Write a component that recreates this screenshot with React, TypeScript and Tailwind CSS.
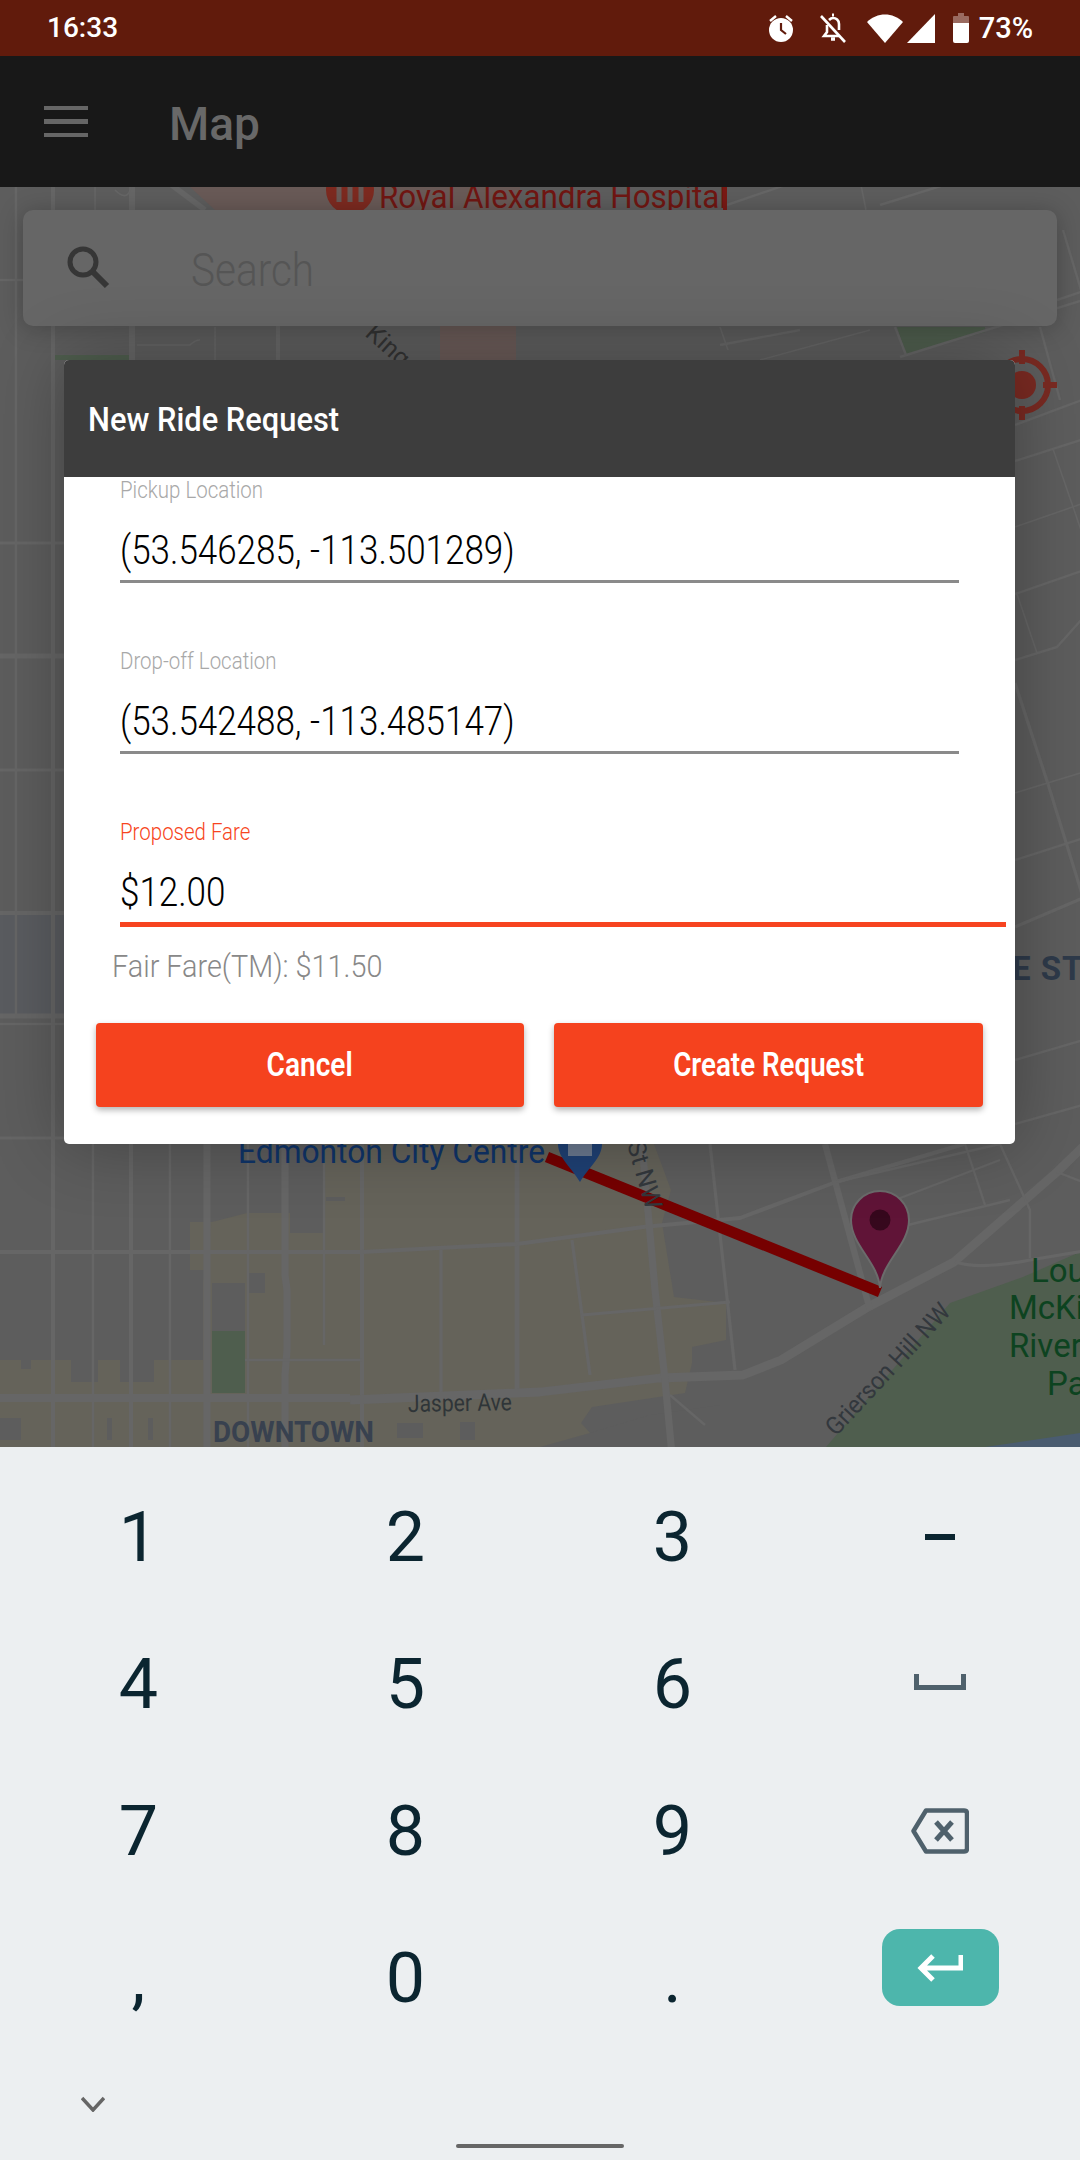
import React from "react";

const roads: [string, number][] = [
  ["M16 187V1018", 3], ["M53 187V1447", 5], ["M93 1144V1447", 3], ["M131 187V1447", 5], ["M170 1144V1447", 3],
  ["M207 1144V1447", 9], ["M278 326V360", 5], ["M248 1144V1447", 3], ["M285 1144V1275L287 1290V1350L285 1375V1447", 9],
  ["M324 1144V1345", 3], ["M362 1144V1447", 5], ["M441 1250V1395", 4], ["M517 1144V1392", 6],
  ["M-5 280H23", 3], ["M-5 543H64", 4], ["M-5 656H64", 6], ["M-5 770H64", 4], ["M-5 913H64", 5], ["M-5 1016H64", 6], ["M-5 1024H64", 3], ["M-5 1138H64", 4],
  ["M-5 1252H362L517 1244L643 1227L740 1218L836 1182L964 1144", 5],
  ["M-5 1398H350", 10],
  ["M350 1400L540 1392L660 1378L743 1375L781 1360L868 1307L954 1262L1057 1172L1090 1140", 11],
  ["M245 1360H362", 3],
  ["M642 1144L655 1290L665 1380L672 1455", 9], ["M572 1240L590 1375", 4], ["M582 1315L730 1302", 4], ["M710 1144L735 1370", 4],
  ["M825 1144L870 1310", 8], ["M836 1182L1000 1144", 3], ["M895 1200L1000 1160", 3], ["M908 1225L1010 1200", 3], ["M965 1144L985 1205", 3], ["M1000 1144L1030 1210L1030 1258", 3],
  ["M955 1262Q980 1270 1030 1260L1090 1250", 4], ["M1057 1172L1090 1185", 3], ["M670 1395L705 1425", 3],
  ["M1015 461L1090 437", 3], ["M1015 527L1090 501", 2], ["M1015 594L1090 568", 3], ["M1015 660L1057 647L1090 610", 3], ["M1015 683L1048 784L1090 920", 4],
  ["M1015 793L1090 770", 2], ["M1015 860L1090 836", 3], ["M1015 927L1090 895", 4], ["M1015 1060L1090 1038", 3], ["M1015 1124L1090 1103", 3],
  ["M1053 449L1090 556", 2], ["M1017 594L1037 653", 2],
  ["M727 205L800 180", 3], ["M880 205L960 180", 3], ["M860 180L866 210", 2], ["M1063 230L1090 320", 3], ["M1057 300L1090 289", 3],
  ["M900 357L1090 298", 3], ["M720 345L800 330", 3], ["M760 360L870 330", 2], ["M895 327L906 355", 3], ["M720 327L728 350", 2],
  ["M1015 425L1090 397", 3], ["M1040 327L1060 400", 3],
  ["M133 180V360", 5], ["M95 180V210", 2], ["M115 190Q130 205 132 180", 2], ["M165 180L205 210", 7], ["M137 345H190Q195 340 200 340", 2], ["M215 327L215 360", 2],
];

function MapArt() {
  return (
    <svg viewBox="0 187 1080 1260" className="absolute inset-0 h-full w-full" xmlns="http://www.w3.org/2000/svg">
      <rect x="0" y="187" width="1080" height="1260" fill="#5d5d5d" />
      <rect x="0" y="913" width="64" height="102" fill="#5a5c60" />
      <polygon points="190,187 520,187 520,210 215,210" fill="#695a57" />
      <rect x="440" y="326" width="76" height="34" fill="#695a57" />
      <polygon points="55,355 130,355 130,360 55,360" fill="#4f5e4e" />
      <polygon points="897,327 985,327 985,332 906,355" fill="#4f5e4e" />
      <g fill="#65635a">
        <rect x="0" y="1360" width="205" height="87" />
        <rect x="190" y="1222" width="22" height="48" />
        <polygon points="324,1144 654,1144 671,1190 662,1223 674,1297 726,1303 726,1340 692,1347 692,1363 685,1393 592,1407 581,1423 590,1433 540,1447 203,1447 203,1283 212,1222 247,1213 290,1213 290,1233 324,1233" />
      </g>
      <g fill="#5d5d5d">
        <rect x="212" y="1283" width="33" height="48" />
        <rect x="248" y="1273" width="17" height="20" />
        <rect x="247" y="1144" width="77" height="69" />
        <rect x="290" y="1213" width="34" height="20" />
        <rect x="21" y="1358" width="10" height="11" />
        <rect x="71" y="1360" width="27" height="22" />
        <rect x="120" y="1360" width="34" height="22" />
        <rect x="0" y="1418" width="21" height="22" />
        <rect x="107" y="1418" width="5" height="22" />
        <rect x="148" y="1418" width="5" height="22" />
        <rect x="397" y="1423" width="26" height="15" />
        <rect x="460" y="1422" width="15" height="18" />
        <rect x="326" y="1197" width="19" height="4" />
        <polygon points="590,1433 650,1415 720,1405 720,1447 590,1447" />
      </g>
      <rect x="212" y="1331" width="33" height="62" fill="#4f5e4e" />
      <polygon points="826,1447 950,1303 1023,1277 1080,1252 1080,1447" fill="#4f5e4e" />
      <polygon points="985,1447 1080,1433 1080,1447" fill="#4a5c70" />
      <g fill="none" stroke="#666666" strokeLinejoin="round">
        {roads.map(([d, w], i) => (
          <path key={i} d={d} strokeWidth={w * 0.8} />
        ))}
      </g>
      <circle cx="350" cy="190" r="24" fill="#7d2a20" />
      <path d="M339 187V202M350 187V202M361 187V202" stroke="#695a57" strokeWidth="5" fill="none" />
      <g style={{ fontFamily: "Roboto, sans-serif" }}>
        <text x="379" y="208" fontSize="33" fill="#701612" textLength="348" lengthAdjust="spacingAndGlyphs">Royal Alexandra Hospital</text>
        <text x="0" y="0" fontSize="25" fill="#333" transform="translate(364 335) rotate(42)">Kingsway</text>
        <text x="238" y="1163" fontSize="33" fill="#0f3469" textLength="307" lengthAdjust="spacingAndGlyphs">Edmonton City Centre</text>
        <text x="408" y="1412" fontSize="24" fill="#2f3538" textLength="104" lengthAdjust="spacingAndGlyphs" transform="rotate(-1 408 1412)">Jasper Ave</text>
        <text x="213" y="1442" fontSize="29" fontWeight="700" fill="#38414f" textLength="161" lengthAdjust="spacingAndGlyphs">DOWNTOWN</text>
        <text x="0" y="0" fontSize="25" fill="#33383d" textLength="170" lengthAdjust="spacingAndGlyphs" transform="translate(836 1437) rotate(-47)">Grierson Hill NW</text>
        <text x="1012" y="980" fontSize="33" fontWeight="700" letterSpacing="1" fill="#2e3a4a">E STR</text>
        <g fill="#0d4320" fontSize="33">
          <text x="1031" y="1282">Lou</text>
          <text x="1009" y="1319">McKi</text>
          <text x="1009" y="1357">River</text>
          <text x="1047" y="1395">Pa</text>
        </g>
      </g>
      <path d="M547 1157L880 1292" stroke="#760000" strokeWidth="11" fill="none" />
      <path d="M558 1144H602C602 1158 588 1168 580 1182C572 1168 558 1158 558 1144Z" fill="#1f4175" />
      <rect x="568" y="1144" width="24" height="12" fill="#6b7a90" />
      <text x="0" y="0" fontSize="25" fill="#33383d" transform="translate(627 1144) rotate(74)" style={{ fontFamily: "Roboto, sans-serif" }}>St NW</text>
      <path d="M880 1288C878 1262 851 1245 851 1220A29 29 0 0 1 909 1220C909 1245 882 1262 880 1288Z" fill="#601437" stroke="#6b6b6b" strokeWidth="2" />
      <circle cx="880" cy="1220" r="10.5" fill="#36081d" />
      <rect x="723" y="187" width="4" height="23" fill="#7a1a14" />
      <g fill="none" stroke="#7a2a22">
        <circle cx="1022" cy="385" r="26" strokeWidth="6" />
        <path d="M1022 350V364M1022 406V420M987 385H1001M1043 385H1057" strokeWidth="6" />
      </g>
      <circle cx="1022" cy="385" r="14" fill="#7a2a22" />
    </svg>
  );
}

function StatusIcons() {
  return (
    <div className="flex items-center">
      <svg width="30" height="30" viewBox="0 0 30 30" fill="#fff">
        <circle cx="15" cy="17" r="12" />
        <path d="M4 8L10 3M26 8L20 3" stroke="#fff" strokeWidth="2.4" fill="none" />
        <path d="M15 10V17L20 21" stroke="#611b0c" strokeWidth="2.2" fill="none" />
      </svg>
      <svg width="30" height="32" viewBox="0 0 30 32" className="ml-[22px]" fill="none" stroke="#fff" strokeWidth="2.6">
        <path d="M9 24H21M21 18V12C21 8 18 6 15 6C13 6 12 7 11 8M9 13V20L6 24H12" />
        <path d="M13 27H17" strokeWidth="3.5" />
        <path d="M14 3H16" strokeWidth="3" />
        <path d="M3 4L27 30" />
      </svg>
      <svg width="36" height="29" viewBox="0 0 36 29" className="ml-[19px]" fill="#fff">
        <path d="M0 8C10 -2 26 -2 36 8L18 29Z" />
      </svg>
      <svg width="28" height="29" viewBox="0 0 28 29" className="ml-[4px]" fill="#fff">
        <path d="M28 0V29H0Z" />
      </svg>
      <svg width="16" height="30" viewBox="0 0 16 30" className="ml-[18px]">
        <path d="M5 0H11V3H15Q16 3 16 4V12H0V4Q0 3 1 3H5Z" fill="#9a6a60" />
        <path d="M0 10H16V28Q16 30 14 30H2Q0 30 0 28Z" fill="#fff" />
      </svg>
      <span className="ml-[10px] text-[29px] font-medium leading-none text-white">73%</span>
    </div>
  );
}

function Field({ label, value, active }: { label: string; value: string; active?: boolean }) {
  return (
    <div className={active ? "w-[886px]" : "w-[839px]"}>
      <div className={`flex h-[28px] items-center text-[23px] font-light ${active ? "text-[#f74420]" : "text-[#a8a8a8]"}`}>
        <span className="inline-block origin-left scale-x-[0.89]">{label}</span>
      </div>
      <div className="flex h-[75px] items-end pb-[9px] text-[40px] font-light leading-none text-black">
        <span className="inline-block origin-left scale-x-[0.875]">{value}</span>
      </div>
      <div className={active ? "h-[5px] bg-[#f74420]" : "h-[3px] bg-[#8a8a8a]"} />
    </div>
  );
}

function Key({ children }: { children: React.ReactNode }) {
  return <div className="flex h-[147px] items-center justify-center text-[70px] leading-none text-[#0b2530]">{children}</div>;
}

export default function App() {
  const keys = ["1", "2", "3", "-", "4", "5", "6", "space", "7", "8", "9", "back", ",", "0", ".", "enter"];
  return (
    <div className="flex h-[2160px] w-[1080px] flex-col overflow-hidden bg-[#eceff1] font-['Roboto',sans-serif]">
      <div className="flex h-[56px] shrink-0 items-center justify-between bg-[#611b0c] pl-[47px] pr-[47px] text-white">
        <span className="text-[28px] font-medium leading-none">16:33</span>
        <StatusIcons />
      </div>
      <div className="flex h-[131px] shrink-0 items-center bg-[#181818] pl-[44px]">
        <div className="flex w-[44px] flex-col gap-[9px]">
          <div className="h-[4px] bg-[#666]" />
          <div className="h-[5px] bg-[#666]" />
          <div className="h-[4px] bg-[#666]" />
        </div>
        <span className="ml-[81px] pt-[5px] text-[46px] font-medium text-[#686868]">Map</span>
      </div>
      <div className="relative h-[1260px] shrink-0 overflow-hidden">
        <MapArt />
        <div className="relative flex flex-col pt-[23px]">
          <div className="mx-[23px] flex h-[116px] items-center rounded-[10px] bg-[#666] shadow-[0_2px_24px_rgba(0,0,0,0.25)]">
            <svg width="46" height="46" viewBox="0 0 46 46" className="ml-[44px]" fill="none" stroke="#363636" strokeWidth="5">
              <circle cx="16" cy="17" r="13" />
              <path d="M26 27L40 41" strokeWidth="6" />
            </svg>
            <span className="ml-[78px] inline-block origin-left scale-x-[0.88] pt-[4px] text-[46px] font-light text-[#555]">Search</span>
          </div>
          <div className="ml-[64px] mt-[34px] w-[951px] overflow-hidden rounded-[5px] bg-white shadow-[0_0_70px_rgba(0,0,0,0.3)]">
            <div className="flex h-[117px] items-center bg-[#3d3d3d] pl-[24px] pt-[2px] text-[33px] font-medium text-white">
              <span className="inline-block origin-left scale-x-[0.935]">New Ride Request</span>
            </div>
            <div className="pl-[56px]">
              <Field label="Pickup Location" value="(53.546285, -113.501289)" />
              <div className="mt-[65px]">
                <Field label="Drop-off Location" value="(53.542488, -113.485147)" />
              </div>
              <div className="mt-[65px]">
                <Field label="Proposed Fare" value="$12.00" active />
              </div>
            </div>
            <div className="ml-[48px] mt-[19px] flex h-[40px] items-center text-[32px] font-light text-[#888]">
              <span className="inline-block origin-left scale-x-[0.9]">Fair Fare(TM): $11.50</span>
            </div>
            <div className="mt-[37px] flex gap-[30px] pb-[37px] pl-[32px] pr-[32px]">
              <button className="flex h-[84px] w-[428px] items-center justify-center rounded-[4px] bg-[#f5421e] text-[33px] font-semibold text-white shadow-[0_3px_6px_rgba(0,0,0,0.3)]">
                <span className="inline-block scale-x-[0.85]">Cancel</span>
              </button>
              <button className="flex h-[84px] w-[429px] items-center justify-center rounded-[4px] bg-[#f5421e] text-[33px] font-semibold text-white shadow-[0_3px_6px_rgba(0,0,0,0.3)]">
                <span className="inline-block scale-x-[0.84]">Create Request</span>
              </button>
            </div>
          </div>
        </div>
      </div>
      <div className="h-[713px] shrink-0 bg-[#eceff1]">
        <div className="grid grid-cols-[267px_267px_267px_267px] pl-[5px] pt-[16px]">
          {keys.map((k) => (
            <Key key={k}>
              {k === "-" ? (
                <div className="h-[6px] w-[30px] bg-[#0b2530]" />
              ) : k === "space" ? (
                <svg width="52" height="16" viewBox="0 0 52 16" className="mb-[4px]" fill="none" stroke="#4f616c" strokeWidth="5">
                  <path d="M2.5 0V13.5H49.5V0" />
                </svg>
              ) : k === "back" ? (
                <svg width="58" height="46" viewBox="0 0 58 46" fill="none" stroke="#4f616c" strokeWidth="4.5" strokeLinejoin="round">
                  <path d="M15 2.5H53Q56 2.5 56 5.5V40.5Q56 43.5 53 43.5H15L2.5 23Z" />
                  <path d="M25 14L41 32M41 14L25 32" strokeWidth="5" />
                </svg>
              ) : k === "enter" ? (
                <div className="mb-[20px] ml-[1px] flex h-[77px] w-[117px] items-center justify-center rounded-[18px] bg-[#4db6ac]">
                  <svg width="46" height="30" viewBox="0 0 46 30" fill="none" stroke="#fff" strokeWidth="5">
                    <path d="M44 2V15H5M16 3L4 15L16 27" />
                  </svg>
                </div>
              ) : (
                k
              )}
            </Key>
          ))}
        </div>
        <div className="h-[109px]">
          <svg width="24" height="16" viewBox="0 0 24 16" className="ml-[81px] mt-[45px]" fill="none" stroke="#666" strokeWidth="3.5">
            <path d="M1 2L12 14L23 2" />
          </svg>
          <div className="mx-auto mt-[32px] h-[4px] w-[168px] rounded-full bg-[#666]" />
        </div>
      </div>
    </div>
  );
}
